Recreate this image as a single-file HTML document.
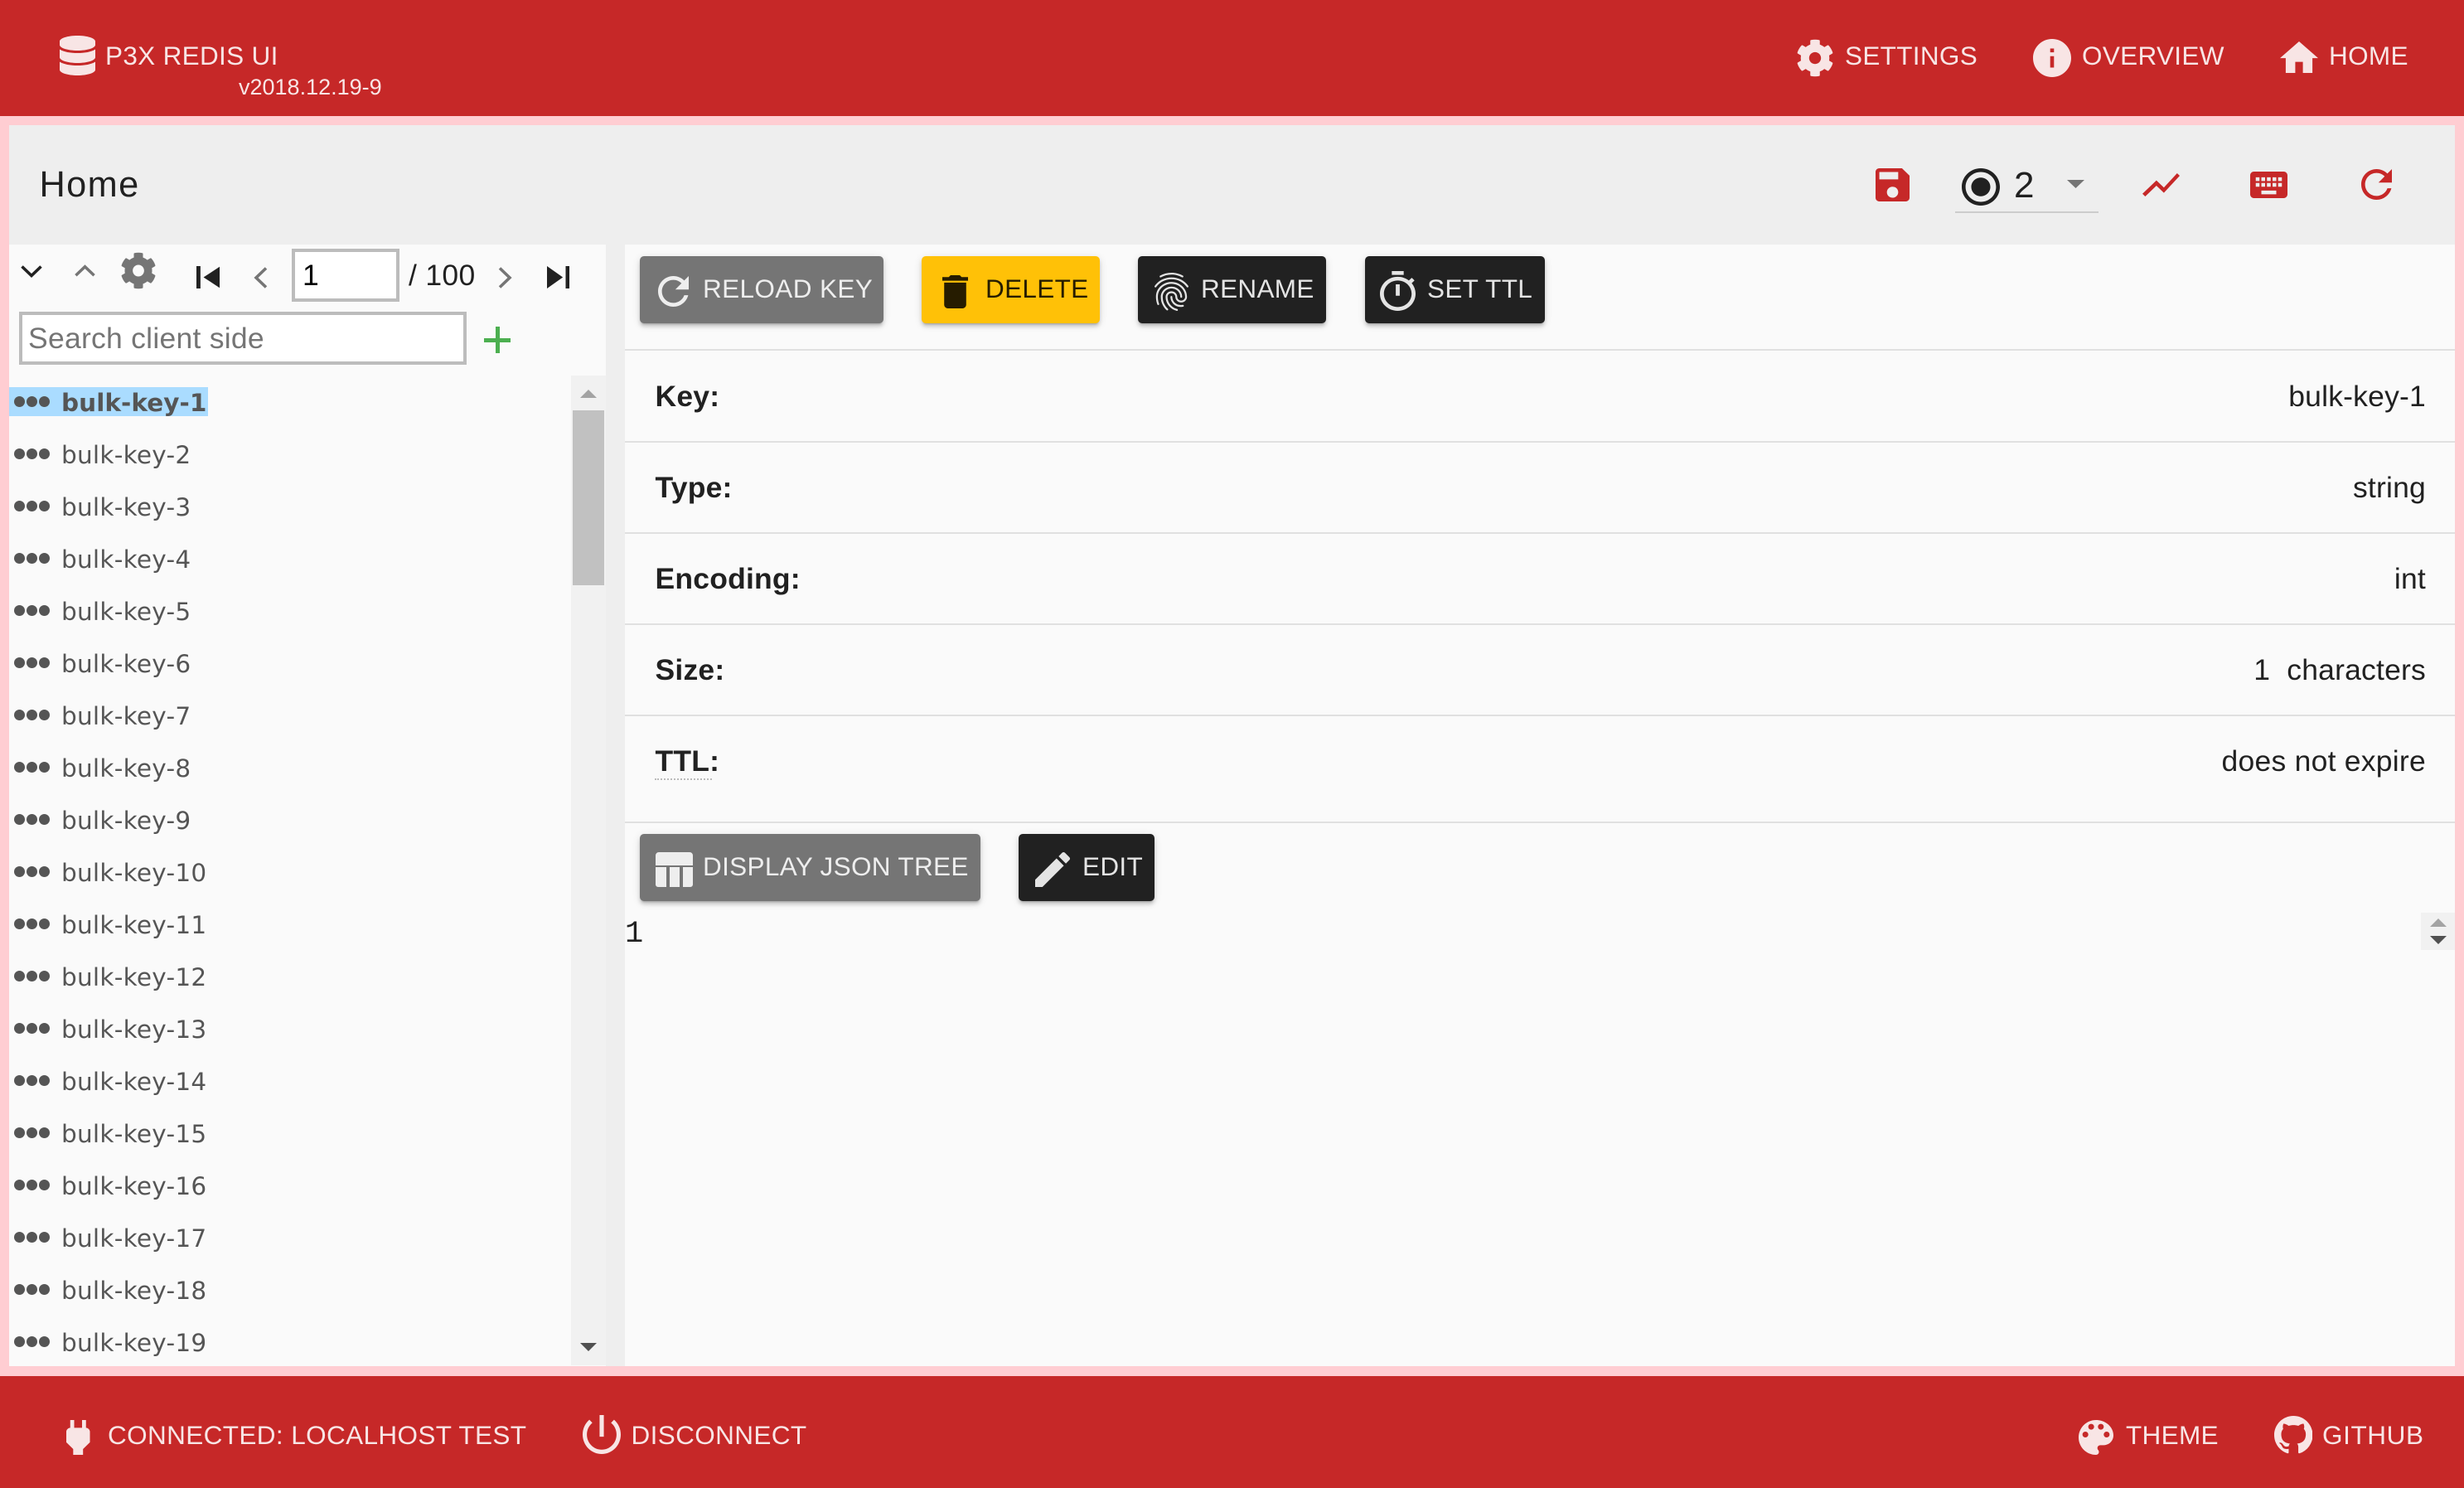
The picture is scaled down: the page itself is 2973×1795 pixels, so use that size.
<!DOCTYPE html>
<html lang="en">
<head>
<meta charset="utf-8">
<title>P3X Redis UI</title>
<style>
html,body{margin:0;padding:0;width:2973px;height:1795px;overflow:hidden;background:#ffcdd2}
#p{position:relative;width:2973px;height:1795px;overflow:hidden;font-family:"Liberation Sans",Arial,sans-serif;color:#212121}
.b{position:absolute}
.t{position:absolute;white-space:nowrap;line-height:1;font-size:31.5px;letter-spacing:.32px}
.w{color:#f8e5e5}
svg.i{position:absolute;display:block}
.hd{fill:#f8e5e5}
.btn{position:absolute;border-radius:5px;box-shadow:0 3px 2px -2px rgba(0,0,0,.2),0 4px 4px 0 rgba(0,0,0,.14),0 2px 10px 0 rgba(0,0,0,.12)}
.line{position:absolute;left:754px;width:2208px;height:2px;background:#e0e0e0}
.lab,.val{position:absolute;white-space:nowrap;line-height:1;font-size:35.5px;color:#212121;letter-spacing:.2px}
.lab{left:790.5px;font-weight:700}
.val{right:46px}
.inp{position:absolute;box-sizing:border-box;border:4px solid #bcbcbc;background:#fff}
.row{position:absolute;left:74px;white-space:nowrap;font:29.5px/1 "DejaVu Sans",sans-serif;color:#555;letter-spacing:.25px}
.dots{position:absolute;left:16.5px;width:13px;height:13px;border-radius:50%;background:#555;box-shadow:15px 0 #555,30px 0 #555}
</style>
</head>
<body>
<div id="p">
<!-- header -->
<div class="b" style="left:0;top:0;width:2973px;height:140px;background:#c62828"></div>
<svg class="i hd" style="left:72px;top:43px;width:43px;height:48px" viewBox="0 0 448 512" preserveAspectRatio="none"><path d="M448 73.143v45.714C448 159.143 347.667 192 224 192S0 159.143 0 118.857V73.143C0 32.857 100.333 0 224 0s224 32.857 224 73.143zM448 176v102.857C448 319.143 347.667 352 224 352S0 319.143 0 278.857V176c48.125 33.143 136.208 48.572 224 48.572S399.874 209.143 448 176zm0 160v102.857C448 479.143 347.667 512 224 512S0 479.143 0 438.857V336c48.125 33.143 136.208 48.572 224 48.572S399.874 369.143 448 336z"/></svg>
<div class="t w" style="left:127px;top:52.3px">P3X REDIS UI</div>
<div class="t w" style="left:288px;top:92.1px;font-size:27px;letter-spacing:0">v2018.12.19-9</div>

<svg class="i hd" style="left:2167px;top:47px;width:46px;height:46px" viewBox="0 0 512 512" preserveAspectRatio="none"><path d="M487.4 315.7l-42.6-24.6c4.3-23.2 4.3-47 0-70.2l42.6-24.6c4.9-2.8 7.1-8.6 5.5-14-11.1-35.6-30-67.8-54.7-94.6-3.8-4.1-10-5.1-14.8-2.3L380.8 110c-17.9-15.4-38.5-27.3-60.8-35.1V25.8c0-5.6-3.9-10.5-9.4-11.7-36.7-8.2-74.3-7.8-109.2 0-5.5 1.2-9.4 6.1-9.4 11.7V75c-22.2 7.9-42.8 19.8-60.8 35.1L88.7 85.5c-4.9-2.8-11-1.9-14.8 2.3-24.7 26.7-43.6 58.9-54.7 94.6-1.7 5.4.6 11.2 5.5 14L67.3 221c-4.3 23.2-4.3 47 0 70.2l-42.6 24.6c-4.9 2.8-7.1 8.6-5.5 14 11.1 35.6 30 67.8 54.7 94.6 3.8 4.1 10 5.1 14.8 2.3l42.6-24.6c17.9 15.4 38.5 27.3 60.8 35.1v49.2c0 5.6 3.9 10.5 9.4 11.7 36.7 8.2 74.3 7.8 109.2 0 5.5-1.2 9.4-6.1 9.4-11.7v-49.2c22.2-7.9 42.8-19.8 60.8-35.1l42.6 24.6c4.9 2.8 11 1.9 14.8-2.3 24.7-26.7 43.6-58.9 54.7-94.6 1.5-5.5-.7-11.3-5.6-14.1zM256 336c-44.1 0-80-35.9-80-80s35.9-80 80-80 80 35.9 80 80-35.9 80-80 80z"/></svg>
<div class="t w" style="left:2226px;top:52.3px">SETTINGS</div>
<svg class="i hd" style="left:2453px;top:47px;width:46px;height:46px" viewBox="2 2 20 20" preserveAspectRatio="none"><path d="M12 2C6.48 2 2 6.48 2 12s4.48 10 10 10 10-4.48 10-10S17.52 2 12 2zm1 15h-2v-6h2v6zm0-8h-2V7h2v2z"/></svg>
<div class="t w" style="left:2512px;top:52.3px">OVERVIEW</div>
<svg class="i hd" style="left:2751px;top:50px;width:46px;height:38px" viewBox="2 3 20 17" preserveAspectRatio="none"><path d="M10 20v-6h4v6h5v-8h3L12 3 2 12h3v8z"/></svg>
<div class="t w" style="left:2810px;top:52.3px">HOME</div>

<!-- toolbar -->
<div class="b" style="left:11px;top:151px;width:2951px;height:144px;background:#eee"></div>
<div class="t" style="left:47.5px;top:202px;font-size:43.3px;letter-spacing:1.4px">Home</div>
<svg class="i" fill="#c62828" style="left:2263px;top:203px;width:41px;height:40px" viewBox="3 3 18 18" preserveAspectRatio="none"><path d="M17 3H5c-1.11 0-2 .9-2 2v14c0 1.1.89 2 2 2h14c1.1 0 2-.9 2-2V7l-4-4zm-5 16c-1.66 0-3-1.34-3-3s1.34-3 3-3 3 1.34 3 3-1.34 3-3 3zm3-10H5V5h10v4z"/></svg>
<svg class="i" fill="#212121" style="left:2367px;top:203px;width:46px;height:45px" viewBox="2 2 20 20" preserveAspectRatio="none"><path d="M12 7c-2.76 0-5 2.24-5 5s2.24 5 5 5 5-2.24 5-5-2.24-5-5-5zm0-5C6.48 2 2 6.48 2 12s4.48 10 10 10 10-4.48 10-10S17.52 2 12 2zm0 18c-4.42 0-8-3.58-8-8s3.58-8 8-8 8 3.58 8 8-3.58 8-8 8z"/></svg>
<div class="t" style="left:2430px;top:202.3px;font-size:44px">2</div>
<svg class="i" fill="#757575" style="left:2494px;top:217px;width:21px;height:10px" viewBox="0 0 20 10" preserveAspectRatio="none"><polygon points="0,0 20,0 10,10"/></svg>
<div class="b" style="left:2359px;top:255px;width:173px;height:2px;background:#ccc"></div>
<svg class="i" fill="#c62828" style="left:2585px;top:209px;width:45px;height:28px" viewBox="2 5.51 20 12.98" preserveAspectRatio="none"><path d="M3.5 18.49l6-6.01 4 4L22 6.92l-1.41-1.41-7.09 7.97-4-4L2 16.99z"/></svg>
<svg class="i" fill="#c62828" style="left:2715px;top:207px;width:45px;height:32px" viewBox="2 5 20 14" preserveAspectRatio="none"><path d="M20 5H4c-1.1 0-1.99.9-1.99 2L2 17c0 1.1.9 2 2 2h16c1.1 0 2-.9 2-2V7c0-1.1-.9-2-2-2zm-9 3h2v2h-2V8zm0 3h2v2h-2v-2zM8 8h2v2H8V8zm0 3h2v2H8v-2zm-1 2H5v-2h2v2zm0-3H5V8h2v2zm9 7H8v-2h8v2zm0-4h-2v-2h2v2zm0-3h-2V8h2v2zm3 3h-2v-2h2v2zm0-3h-2V8h2v2z"/></svg>
<svg class="i" fill="#c62828" style="left:2849px;top:204px;width:37px;height:37px" viewBox="4 4 16 16" preserveAspectRatio="none"><path d="M17.65 6.35C16.2 4.9 14.21 4 12 4c-4.42 0-7.99 3.58-7.99 8s3.57 8 7.99 8c3.73 0 6.84-2.55 7.73-6h-2.08c-.82 2.33-3.04 4-5.65 4-3.31 0-6-2.69-6-6s2.69-6 6-6c1.66 0 3.14.69 4.22 1.78L13 11h7V4l-2.35 2.35z"/></svg>

<!-- panels -->
<div class="b" style="left:11px;top:295px;width:2951px;height:1353px;background:#eee"></div>
<div class="b" style="left:11px;top:295px;width:720px;height:1353px;background:#fafafa"></div>
<div class="b" style="left:754px;top:295px;width:2208px;height:1353px;background:#fafafa"></div>

<!-- left toolbar -->
<svg class="i" style="left:25px;top:320px;width:26px;height:15px" viewBox="0 0 26 15" fill="none" stroke="#212121" stroke-width="3.6"><polyline points="1.5,1.5 13,12.5 24.5,1.5"/></svg>
<svg class="i" style="left:90px;top:319px;width:25px;height:15px" viewBox="0 0 26 15" fill="none" stroke="#757575" stroke-width="3.6"><polyline points="1.5,13.5 13,2.5 24.5,13.5"/></svg>
<svg class="i" fill="#757575" style="left:144.5px;top:304px;width:44px;height:45px" viewBox="0 0 512 512" preserveAspectRatio="none"><path d="M487.4 315.7l-42.6-24.6c4.3-23.2 4.3-47 0-70.2l42.6-24.6c4.9-2.8 7.1-8.6 5.5-14-11.1-35.6-30-67.8-54.7-94.6-3.8-4.1-10-5.1-14.8-2.3L380.8 110c-17.9-15.4-38.5-27.3-60.8-35.1V25.8c0-5.6-3.9-10.5-9.4-11.7-36.7-8.2-74.3-7.8-109.2 0-5.5 1.2-9.4 6.1-9.4 11.7V75c-22.2 7.9-42.8 19.8-60.8 35.1L88.7 85.5c-4.9-2.8-11-1.9-14.8 2.3-24.7 26.7-43.6 58.9-54.7 94.6-1.7 5.4.6 11.2 5.5 14L67.3 221c-4.3 23.2-4.3 47 0 70.2l-42.6 24.6c-4.9 2.8-7.1 8.6-5.5 14 11.1 35.6 30 67.8 54.7 94.6 3.8 4.1 10 5.1 14.8 2.3l42.6-24.6c17.9 15.4 38.5 27.3 60.8 35.1v49.2c0 5.6 3.9 10.5 9.4 11.7 36.7 8.2 74.3 7.8 109.2 0 5.5-1.2 9.4-6.1 9.4-11.7v-49.2c22.2-7.9 42.8-19.8 60.8-35.1l42.6 24.6c4.9 2.8 11 1.9 14.8-2.3 24.7-26.7 43.6-58.9 54.7-94.6 1.5-5.5-.7-11.3-5.6-14.1zM256 336c-44.1 0-80-35.9-80-80s35.9-80 80-80 80 35.9 80 80-35.9 80-80 80z"/></svg>
<svg class="i" fill="#212121" style="left:237px;top:321px;width:28px;height:27px" viewBox="6 6 11.5 12" preserveAspectRatio="none"><path d="M6 6h2v12H6zm3.5 6l8.5 6V6z"/></svg>
<svg class="i" style="left:306px;top:322px;width:17px;height:26px" viewBox="0 0 17 26" fill="none" stroke="#757575" stroke-width="3.6"><polyline points="15,1.5 3,13 15,24.5"/></svg>
<div class="inp" style="left:352px;top:300px;width:130px;height:64px"></div>
<div class="t" style="left:365px;top:315px;font-size:35.5px;color:#000">1</div>
<div class="t" style="left:493px;top:315px;font-size:35.5px">/ 100</div>
<svg class="i" style="left:601px;top:322px;width:17px;height:26px" viewBox="0 0 17 26" fill="none" stroke="#757575" stroke-width="3.6"><polyline points="2,1.5 14,13 2,24.5"/></svg>
<svg class="i" fill="#212121" style="left:660px;top:321px;width:27px;height:27px" viewBox="6 6 12 12" preserveAspectRatio="none"><path d="M6 18l8.5-6L6 6v12zM16 6v12h2V6h-2z"/></svg>

<div class="inp" style="left:23px;top:376px;width:540px;height:64px"></div>
<div class="t" style="left:34px;top:391px;font-size:35.5px;color:#757575;letter-spacing:.26px">Search client side</div>
<div class="b" style="left:584px;top:407.5px;width:32px;height:5px;background:#4caf50"></div>
<div class="b" style="left:597.5px;top:394px;width:5px;height:32px;background:#4caf50"></div>

<!-- tree -->
<div class="b" style="left:11px;top:467px;width:240px;height:35px;background:#aadcff"></div>
<div class="dots" style="top:478px"></div><div class="row" style="top:471.5px;font-weight:700;letter-spacing:.05px">bulk-key-1</div>
<div class="dots" style="top:541px"></div><div class="row" style="top:534.5px">bulk-key-2</div>
<div class="dots" style="top:604px"></div><div class="row" style="top:597.5px">bulk-key-3</div>
<div class="dots" style="top:667px"></div><div class="row" style="top:660.5px">bulk-key-4</div>
<div class="dots" style="top:730px"></div><div class="row" style="top:723.5px">bulk-key-5</div>
<div class="dots" style="top:793px"></div><div class="row" style="top:786.5px">bulk-key-6</div>
<div class="dots" style="top:856px"></div><div class="row" style="top:849.5px">bulk-key-7</div>
<div class="dots" style="top:919px"></div><div class="row" style="top:912.5px">bulk-key-8</div>
<div class="dots" style="top:982px"></div><div class="row" style="top:975.5px">bulk-key-9</div>
<div class="dots" style="top:1045px"></div><div class="row" style="top:1038.5px">bulk-key-10</div>
<div class="dots" style="top:1108px"></div><div class="row" style="top:1101.5px">bulk-key-11</div>
<div class="dots" style="top:1171px"></div><div class="row" style="top:1164.5px">bulk-key-12</div>
<div class="dots" style="top:1234px"></div><div class="row" style="top:1227.5px">bulk-key-13</div>
<div class="dots" style="top:1297px"></div><div class="row" style="top:1290.5px">bulk-key-14</div>
<div class="dots" style="top:1360px"></div><div class="row" style="top:1353.5px">bulk-key-15</div>
<div class="dots" style="top:1423px"></div><div class="row" style="top:1416.5px">bulk-key-16</div>
<div class="dots" style="top:1486px"></div><div class="row" style="top:1479.5px">bulk-key-17</div>
<div class="dots" style="top:1549px"></div><div class="row" style="top:1542.5px">bulk-key-18</div>
<div class="dots" style="top:1612px"></div><div class="row" style="top:1605.5px">bulk-key-19</div>

<!-- scrollbar -->
<div class="b" style="left:689px;top:453px;width:42px;height:1194px;background:#f1f1f1"></div>
<div class="b" style="left:691px;top:495px;width:38px;height:211px;background:#c1c1c1"></div>
<svg class="i" fill="#a3a3a3" style="left:700px;top:470px;width:20px;height:10px" viewBox="0 0 20 10"><polygon points="0,10 20,10 10,0"/></svg>
<svg class="i" fill="#505050" style="left:700px;top:1620px;width:20px;height:10px" viewBox="0 0 20 10"><polygon points="0,0 20,0 10,10"/></svg>

<!-- action buttons -->
<div class="btn" style="left:772px;top:309px;width:294px;height:81px;background:#757575"></div>
<svg class="i" fill="#eee" style="left:794px;top:333px;width:37px;height:37px" viewBox="4 4 16 16" preserveAspectRatio="none"><path d="M17.65 6.35C16.2 4.9 14.21 4 12 4c-4.42 0-7.99 3.58-7.99 8s3.57 8 7.99 8c3.73 0 6.84-2.55 7.73-6h-2.08c-.82 2.33-3.04 4-5.65 4-3.31 0-6-2.69-6-6s2.69-6 6-6c1.66 0 3.14.69 4.22 1.78L13 11h7V4l-2.35 2.35z"/></svg>
<div class="t" style="left:848px;top:333.3px;color:#eee;letter-spacing:.38px">RELOAD KEY</div>

<div class="btn" style="left:1112px;top:309px;width:215px;height:81px;background:#ffc107"></div>
<svg class="i" fill="#261c00" style="left:1137px;top:332px;width:31px;height:40px" viewBox="5 3 14 18" preserveAspectRatio="none"><path d="M6 19c0 1.1.9 2 2 2h8c1.1 0 2-.9 2-2V7H6v12zM19 4h-3.5l-1-1h-5l-1 1H5v2h14V4z"/></svg>
<div class="t" style="left:1189px;top:333.3px;color:#261c00">DELETE</div>

<div class="btn" style="left:1373px;top:309px;width:227px;height:81px;background:#212121"></div>
<svg class="i" fill="#e4e4e4" style="left:1393px;top:329px;width:41px;height:46px" viewBox="3 2 18 20" preserveAspectRatio="none"><path d="M17.81 4.47c-.08 0-.16-.02-.23-.06C15.66 3.42 14 3 12.01 3c-1.98 0-3.86.47-5.57 1.41-.24.13-.54.04-.68-.2-.13-.24-.04-.55.2-.68C7.82 2.52 9.86 2 12.01 2c2.13 0 3.99.47 6.03 1.52.25.13.34.43.21.67-.09.18-.26.28-.44.28zM3.5 9.72c-.1 0-.2-.03-.29-.09-.23-.16-.28-.47-.12-.7.99-1.4 2.25-2.5 3.75-3.27C9.98 4.04 14 4.03 17.15 5.65c1.5.77 2.76 1.86 3.75 3.25.16.22.11.54-.12.7-.23.16-.54.11-.7-.12-.9-1.26-2.04-2.25-3.39-2.94-2.87-1.47-6.54-1.47-9.4.01-1.36.7-2.5 1.7-3.4 2.96-.08.14-.23.21-.39.21zm6.25 12.07c-.13 0-.26-.05-.35-.15-.87-.87-1.34-1.43-2.01-2.64-.69-1.23-1.05-2.73-1.05-4.34 0-2.97 2.54-5.39 5.66-5.39s5.66 2.42 5.66 5.39c0 .28-.22.5-.5.5s-.5-.22-.5-.5c0-2.42-2.09-4.39-4.66-4.39-2.57 0-4.66 1.97-4.66 4.39 0 1.44.32 2.77.93 3.85.64 1.15 1.08 1.64 1.85 2.42.19.2.19.51 0 .71-.11.1-.24.15-.37.15zm7.17-1.85c-1.19 0-2.24-.3-3.1-.89-1.49-1.01-2.38-2.65-2.38-4.39 0-.28.22-.5.5-.5s.5.22.5.5c0 1.41.72 2.74 1.94 3.56.71.48 1.54.71 2.54.71.24 0 .64-.03 1.04-.1.27-.05.53.13.58.41.05.27-.13.53-.41.58-.57.11-1.07.12-1.21.12zM14.91 22c-.04 0-.09-.01-.13-.02-1.59-.44-2.63-1.03-3.72-2.1-1.4-1.39-2.17-3.24-2.17-5.22 0-1.62 1.38-2.94 3.08-2.94 1.7 0 3.08 1.32 3.08 2.94 0 1.07.93 1.94 2.08 1.94s2.08-.87 2.08-1.94c0-3.77-3.25-6.83-7.25-6.83-2.84 0-5.44 1.58-6.61 4.03-.39.81-.59 1.76-.59 2.8 0 .78.07 2.01.67 3.61.1.26-.03.55-.29.64-.26.1-.55-.04-.64-.29-.49-1.31-.73-2.61-.73-3.96 0-1.2.23-2.29.68-3.24 1.33-2.79 4.28-4.6 7.51-4.6 4.55 0 8.25 3.51 8.25 7.83 0 1.62-1.38 2.94-3.08 2.94s-3.08-1.32-3.08-2.94c0-1.07-.93-1.94-2.08-1.94s-2.08.87-2.08 1.94c0 1.71.66 3.31 1.87 4.51.95.94 1.86 1.46 3.27 1.85.27.07.42.35.35.61-.05.23-.26.38-.47.38z"/></svg>
<div class="t" style="left:1449px;top:333.3px;color:#e4e4e4">RENAME</div>

<div class="btn" style="left:1647px;top:309px;width:217px;height:81px;background:#212121"></div>
<svg class="i" fill="#e4e4e4" style="left:1665px;top:327px;width:43px;height:48px" viewBox="3 1 18 21" preserveAspectRatio="none"><path d="M15 1H9v2h6V1zm-4 13h2V8h-2v6zm8.03-6.61l1.42-1.42c-.43-.51-.9-.99-1.41-1.41l-1.42 1.42C16.07 4.74 14.12 4 12 4c-4.97 0-9 4.03-9 9s4.02 9 9 9 9-4.03 9-9c0-2.12-.74-4.07-1.97-5.61zM12 20c-3.87 0-7-3.13-7-7s3.13-7 7-7 7 3.13 7 7-3.13 7-7 7z"/></svg>
<div class="t" style="left:1722px;top:333.3px;color:#e4e4e4">SET TTL</div>

<!-- details table -->
<div class="line" style="top:421px"></div>
<div class="lab" style="top:461px">Key:</div><div class="val" style="top:461px">bulk-key-1</div>
<div class="line" style="top:532px"></div>
<div class="lab" style="top:571px">Type:</div><div class="val" style="top:571px">string</div>
<div class="line" style="top:642px"></div>
<div class="lab" style="top:681px">Encoding:</div><div class="val" style="top:681px">int</div>
<div class="line" style="top:752px"></div>
<div class="lab" style="top:791px">Size:</div><div class="val" style="top:791px">1&nbsp;&nbsp;characters</div>
<div class="line" style="top:862px"></div>
<div class="lab" style="top:901px">TTL:</div><div class="val" style="top:901px;letter-spacing:.25px">does not expire</div>
<div class="b" style="left:790px;top:939px;width:69px;height:0;border-top:2px dotted #bbb"></div>
<div class="line" style="top:991px"></div>

<!-- value buttons -->
<div class="btn" style="left:772px;top:1006px;width:411px;height:81px;background:#757575"></div>
<svg class="i" fill="#eee" style="left:791px;top:1028px;width:45px;height:42px" viewBox="0 0 45 42"><path d="M4 0h37a4 4 0 0 1 4 4v12H0V4a4 4 0 0 1 4-4zM0 18h13v24H3a3 3 0 0 1-3-3zM17 18h12v24H17zM33 18h12v21a3 3 0 0 1-3 3h-9z"/></svg>
<div class="t" style="left:848px;top:1030.3px;color:#eee;letter-spacing:.33px">DISPLAY JSON TREE</div>
<div class="btn" style="left:1229px;top:1006px;width:164px;height:81px;background:#212121"></div>
<svg class="i" fill="#e4e4e4" style="left:1249px;top:1028px;width:42px;height:42px" viewBox="3 3 18 18" preserveAspectRatio="none"><path d="M3 17.25V21h3.75L17.81 9.94l-3.75-3.75L3 17.25zM20.71 7.04c.39-.39.39-1.02 0-1.41l-2.34-2.34c-.39-.39-1.02-.39-1.41 0l-1.83 1.83 3.75 3.75 1.83-1.83z"/></svg>
<div class="t" style="left:1306px;top:1030.3px;color:#e4e4e4">EDIT</div>

<div class="t" style="left:754px;top:1108.6px;font-family:'Liberation Mono',monospace;font-size:37px;letter-spacing:0">1</div>

<!-- spinner -->
<div class="b" style="left:2921px;top:1101px;width:41px;height:45px;background:#f1f1f1"></div>
<svg class="i" fill="#a3a3a3" style="left:2932px;top:1108px;width:20px;height:10px" viewBox="0 0 20 10"><polygon points="0,10 20,10 10,0"/></svg>
<svg class="i" fill="#505050" style="left:2932px;top:1129px;width:20px;height:10px" viewBox="0 0 20 10"><polygon points="0,0 20,0 10,10"/></svg>

<!-- footer -->
<div class="b" style="left:0;top:1660px;width:2973px;height:135px;background:#c62828"></div>
<svg class="i hd" style="left:80px;top:1713px;width:28.5px;height:42px" viewBox="6 3 12 18" preserveAspectRatio="none"><path d="M16,7V3H14V7H10V3H8V7H8C7,7 6,8 6,9V14.5L9.5,18V21H14.5V18L18,14.5V9C18,8 17,7 16,7Z"/></svg>
<div class="t w" style="left:130px;top:1716.3px;letter-spacing:.38px">CONNECTED: LOCALHOST TEST</div>
<svg class="i hd" style="left:703px;top:1707px;width:46px;height:47px" viewBox="3 3 18 18" preserveAspectRatio="none"><path d="M13 3h-2v10h2V3zm4.83 2.17l-1.42 1.42C17.99 7.86 19 9.81 19 12c0 3.87-3.13 7-7 7s-7-3.13-7-7c0-2.19 1.01-4.14 2.58-5.42L6.17 5.17C4.23 6.82 3 9.26 3 12c0 4.97 4.03 9 9 9s9-4.03 9-9c0-2.74-1.23-5.18-3.17-6.83z"/></svg>
<div class="t w" style="left:761.5px;top:1716.3px;letter-spacing:.38px">DISCONNECT</div>
<svg class="i hd" style="left:2508px;top:1713px;width:42px;height:42px" viewBox="3 3 18 18" preserveAspectRatio="none"><path d="M12 3c-4.97 0-9 4.03-9 9s4.03 9 9 9c.83 0 1.5-.67 1.5-1.5 0-.39-.15-.74-.39-1.01-.23-.26-.38-.61-.38-.99 0-.83.67-1.5 1.5-1.5H16c2.76 0 5-2.24 5-5 0-4.42-4.03-8-9-8zm-5.5 9c-.83 0-1.5-.67-1.5-1.5S5.67 9 6.5 9 8 9.67 8 10.5 7.33 12 6.5 12zm3-4C8.67 8 8 7.33 8 6.5S8.67 5 9.5 5s1.5.67 1.5 1.5S10.33 8 9.5 8zm5 0c-.83 0-1.5-.67-1.5-1.5S13.67 5 14.5 5s1.5.67 1.5 1.5S15.33 8 14.5 8zm3 4c-.83 0-1.5-.67-1.5-1.5S16.67 9 17.5 9s1.5.67 1.5 1.5-.67 1.5-1.5 1.5z"/></svg>
<div class="t w" style="left:2565px;top:1716.3px">THEME</div>
<svg class="i hd" style="left:2743.5px;top:1708px;width:46.5px;height:45.5px" viewBox="0 0 16 15.7" preserveAspectRatio="none"><path d="M8 0C3.58 0 0 3.58 0 8c0 3.54 2.29 6.53 5.47 7.59.4.07.55-.17.55-.38 0-.19-.01-.82-.01-1.49-2.01.37-2.53-.49-2.69-.94-.09-.23-.48-.94-.82-1.13-.28-.15-.68-.52-.01-.53.63-.01 1.08.58 1.23.82.72 1.21 1.87.87 2.33.66.07-.52.28-.87.51-1.07-1.78-.2-3.64-.89-3.64-3.95 0-.87.31-1.59.82-2.15-.08-.2-.36-1.02.08-2.12 0 0 .67-.21 2.2.82.64-.18 1.32-.27 2-.27.68 0 1.36.09 2 .27 1.53-1.04 2.2-.82 2.2-.82.44 1.1.16 1.92.08 2.12.51.56.82 1.27.82 2.15 0 3.07-1.87 3.75-3.65 3.95.29.25.54.73.54 1.48 0 1.07-.01 1.93-.01 2.2 0 .21.15.46.55.38A8.013 8.013 0 0016 8c0-4.42-3.58-8-8-8z"/></svg>
<div class="t w" style="left:2802px;top:1716.3px;letter-spacing:.6px">GITHUB</div>
</div>
</body>
</html>
